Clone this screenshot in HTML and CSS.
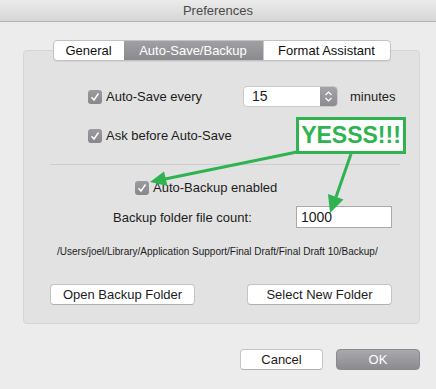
FILE: index.html
```html
<!DOCTYPE html>
<html lang="en">
<head>
    <meta charset="UTF-8">
    <title>Preferences</title>
    <link rel="stylesheet" href="styles.css">
</head>
<body>
    <div class="titlebar">Preferences</div>

    <div class="group">
        <div class="tabs">
            <div class="tab tab-general">General</div>
            <div class="tab tab-backup active">Auto-Save/Backup</div>
            <div class="tab tab-format">Format Assistant</div>
        </div>

        <div class="row row-autosave">
            <label class="check check-wide">
                <span class="box"><svg width="14" height="14" viewBox="0 0 14 14"><path d="M3.5 7.2 L6 10 L10.5 3.5" fill="none" stroke="#fff" stroke-width="1.4"/></svg></span>
                Auto-Save every
            </label>
            <div class="stepper">
                <span class="stepper-value">15</span>
                <span class="stepper-arrows">
                    <svg width="17" height="19" viewBox="0 0 17 19"><path d="M5.5 8 L8.5 5 L11.5 8 M5.5 11 L8.5 14 L11.5 11" fill="none" stroke="#fff" stroke-width="1.2"/></svg>
                </span>
            </div>
            <span class="unit">minutes</span>
        </div>

        <div class="row row-ask">
            <label class="check">
                <span class="box"><svg width="14" height="14" viewBox="0 0 14 14"><path d="M3.5 7.2 L6 10 L10.5 3.5" fill="none" stroke="#fff" stroke-width="1.4"/></svg></span>
                Ask before Auto-Save
            </label>
        </div>

        <div class="separator"></div>

        <div class="row row-backup">
            <label class="check">
                <span class="box"><svg width="14" height="14" viewBox="0 0 14 14"><path d="M3.5 7.2 L6 10 L10.5 3.5" fill="none" stroke="#fff" stroke-width="1.4"/></svg></span>
                Auto-Backup enabled
            </label>
        </div>

        <div class="row row-count">
            <span class="count-label">Backup folder file count:</span>
            <div class="textfield">1000</div>
        </div>

        <div class="path">/Users/joel/Library/Application Support/Final Draft/Final Draft 10/Backup/</div>

        <div class="row row-folders">
            <button class="btn btn-folder">Open Backup Folder</button>
            <button class="btn btn-folder">Select New Folder</button>
        </div>
    </div>

    <div class="footer">
        <button class="btn btn-cancel">Cancel</button>
        <button class="btn btn-ok">OK</button>
    </div>

    <!-- annotation drawn over the dialog -->
    <div class="callout">YESSS!!!</div>
    <svg class="arrows" width="436" height="389" viewBox="0 0 436 389">
        <line x1="297" y1="152" x2="165" y2="179" stroke="#2eb350" stroke-width="3"/>
        <polygon points="150,182 167.5,186 164,171.5" fill="#2eb350"/>
        <line x1="351" y1="154" x2="336" y2="197" stroke="#2eb350" stroke-width="3"/>
        <polygon points="330,213 343.5,199.5 328,194" fill="#2eb350"/>
    </svg>
</body>
</html>
```

FILE: styles.css
```css
body {
    margin: 0;
    width: 436px;
    height: 389px;
    overflow: hidden;
    position: relative;
    background-color: #ececec;
    font-family: "Liberation Sans", Arial, sans-serif;
    font-size: 13px;
    color: #1c1c1c;
}

.titlebar {
    height: 21px;
    line-height: 21px;
    text-align: center;
    color: #4a4a4a;
    background: linear-gradient(#ebebeb, #d6d6d6);
    border-bottom: 1px solid #b4b4b4;
}

/* Grouped panel with the segmented tabs sitting on its edge */
.group {
    margin: 28px 16px 0 23px;
    padding-bottom: 18px;
    background-color: #e2e2e2;
    border: 1px solid #d6d6d6;
    border-radius: 4px;
}

.tabs {
    display: flex;
    width: max-content;
    margin: -11px auto 0;
    border: 1px solid #c2c2c2;
    border-radius: 4px;
    background-color: #fff;
    overflow: hidden;
    box-shadow: 0 1px 0 rgba(0, 0, 0, 0.06);
}

.tab {
    height: 19px;
    line-height: 19px;
    text-align: center;
    font-size: 13px;
    color: #111;
}

.tab-general { width: 70px; }
.tab-backup { width: 139px; }
.tab-format { width: 126px; border-left: 1px solid #c8c8c8; }

.tab.active {
    color: #fff;
    background: linear-gradient(#a0a0a4, #8a8a8f);
}

.row {
    display: flex;
    align-items: center;
}

.row-autosave {
    height: 21px;
    margin-top: 25px;
    padding-left: 64px;
}

.row-ask {
    height: 21px;
    margin-top: 18px;
    padding-left: 64px;
}

.row-backup {
    height: 21px;
    margin-top: 12px;
    padding-left: 111px;
}

.row-count {
    height: 22px;
    margin-top: 8px;
    padding-left: 89px;
}

.row-folders {
    margin-top: 25px;
    padding-left: 26px;
    gap: 52px;
}

.check {
    display: flex;
    align-items: center;
    gap: 4px;
}

.check-wide {
    width: 155px;
}

.box {
    display: block;
    width: 14px;
    height: 14px;
    border-radius: 3px;
    background: linear-gradient(#9b9b9f, #88888c);
}

.box svg {
    display: block;
}

.stepper {
    display: flex;
    width: 95px;
    height: 21px;
    box-sizing: border-box;
    border: 1px solid #c9c9c9;
    border-radius: 4px;
    background-color: #fff;
    overflow: hidden;
}

.stepper-value {
    flex: 1;
    padding-left: 8px;
    line-height: 19px;
    font-size: 14px;
}

.stepper-arrows {
    width: 17px;
    background: linear-gradient(#a4a4a8, #8c8c90);
}

.stepper-arrows svg {
    display: block;
}

.unit {
    margin-left: 12px;
}

.separator {
    height: 1px;
    margin: 18px 19px 0 26px;
    background-color: #cdcdcd;
}

.count-label {
    width: 183px;
}

.textfield {
    width: 96px;
    height: 22px;
    box-sizing: border-box;
    border: 1px solid #a9a9a9;
    background-color: #fff;
    padding-left: 4px;
    line-height: 21px;
    font-size: 14px;
}

.path {
    margin-top: 17px;
    padding-left: 33px;
    font-size: 10px;
    line-height: 14px;
}

.btn {
    height: 21px;
    box-sizing: border-box;
    padding: 0;
    border: 1px solid #c4c4c4;
    border-bottom-color: #b0b0b0;
    border-radius: 4px;
    background-color: #fff;
    font-family: "Liberation Sans", Arial, sans-serif;
    font-size: 13px;
    color: #1c1c1c;
}

.btn-folder {
    width: 145px;
}

.footer {
    display: flex;
    justify-content: flex-end;
    gap: 13px;
    margin-top: 25px;
    padding-right: 16px;
}

.btn-cancel {
    width: 83px;
}

.btn-ok {
    width: 84px;
    color: #fff;
    border-color: #8a8a8e;
    background: linear-gradient(#a9a9ad, #8b8b90);
}

/* Annotation overlay */
.callout {
    position: absolute;
    left: 296px;
    top: 117px;
    width: 110px;
    height: 37px;
    box-sizing: border-box;
    border: 3px solid #2eb350;
    background-color: #fff;
    color: #2eb350;
    font-weight: bold;
    font-size: 23px;
    line-height: 31px;
    text-align: center;
}

.arrows {
    position: absolute;
    left: 0;
    top: 0;
    pointer-events: none;
}
```
